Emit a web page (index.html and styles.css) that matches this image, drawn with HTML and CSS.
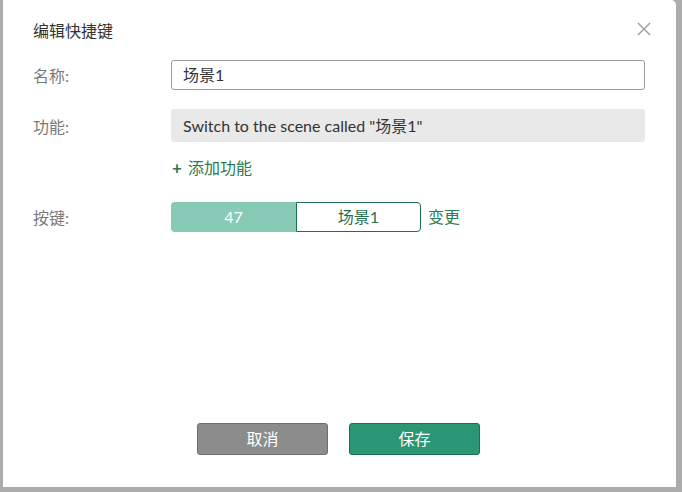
FILE: index.html
```html
<!DOCTYPE html>
<html>
<head>
<meta charset="utf-8">
<link rel="stylesheet" href="styles.css">
</head>
<body>
<div class="dialog">
  <div class="header">
    <div class="title">编辑快捷键</div>
    <svg class="close" width="14" height="14" viewBox="0 0 14 14"><path d="M1 1L13 13M13 1L1 13" stroke="#9a9a9a" stroke-width="1.4" fill="none"/></svg>
  </div>
  <div class="form">
    <div class="row row-name">
      <div class="label">名称:</div>
      <div class="input">场景1</div>
    </div>
    <div class="row row-func">
      <div class="label">功能:</div>
      <div class="func">Switch to the scene called "场景1"</div>
    </div>
    <div class="row row-add">
      <div class="label"></div>
      <div class="add"><span class="plus">+</span>添加功能</div>
    </div>
    <div class="row row-key">
      <div class="label">按键:</div>
      <div class="keys">
        <div class="key-code">47</div>
        <div class="key-name">场景1</div>
      </div>
      <div class="change">变更</div>
    </div>
  </div>
  <div class="footer">
    <div class="btn cancel">取消</div>
    <div class="btn save">保存</div>
  </div>
</div>
</body>
</html>
```
FILE: styles.css
```css
html, body {
  margin: 0;
  padding: 0;
}
body {
  background: #acacac;
  width: 682px;
  height: 492px;
  overflow: hidden;
  font-family: Lato, "Noto Sans CJK SC", sans-serif;
}
.dialog {
  margin-left: 3px;
  width: 673px;
  height: 487px;
  background: #fff;
  border-radius: 0 5px 0 0;
  position: relative;
  display: flex;
  flex-direction: column;
}
.header {
  height: 62px;
  display: flex;
  justify-content: space-between;
  align-items: flex-start;
}
.title {
  margin: 20px 0 0 30px;
  font-size: 16px;
  line-height: 22px;
  color: #333;
}
.close {
  margin: 22px 25px 0 0;
}
.form {
  display: flex;
  flex-direction: column;
}
.row {
  display: flex;
  align-items: center;
}
.label {
  width: 138px;
  padding-left: 30px;
  font-size: 16px;
  color: #7a7a7a;
  flex-shrink: 0;
}
.input {
  width: 461px;
  height: 28px;
  border: 1px solid #9a9a9a;
  border-radius: 3px;
  padding-left: 11px;
  line-height: 28px;
  font-size: 16px;
  color: #333;
}
.row-name {
  margin-top: -2px;
}
.row-func {
  margin-top: 19px;
}
.func {
  width: 462px;
  height: 33px;
  background: #e9e9e9;
  border-radius: 3px;
  padding-left: 12px;
  line-height: 33px;
  font-size: 16px;
  color: #333;
}
.row-add {
  margin-top: 14px;
}
.add {
  margin-left: 1px;
  font-size: 16px;
  line-height: 24px;
  color: #2b7a52;
  display: flex;
  align-items: center;
}
.plus {
  font-weight: bold;
  font-size: 17px;
  margin-right: 6px;
}
.row-key {
  margin-top: 22px;
}
.keys {
  display: flex;
  height: 30px;
}
.key-code {
  width: 125px;
  background: #87cab6;
  color: #fff;
  font-size: 16px;
  line-height: 30px;
  text-align: center;
  border-radius: 4px 0 0 4px;
}
.key-name {
  width: 123px;
  height: 28px;
  border: 1px solid #1f6e4c;
  border-radius: 0 4px 4px 0;
  color: #1f6e4c;
  font-size: 16px;
  line-height: 28px;
  text-align: center;
}
.change {
  margin-left: 7px;
  margin-top: -2px;
  font-size: 16px;
  color: #2b7a52;
}
.footer {
  margin-top: auto;
  margin-bottom: 32px;
  display: flex;
  justify-content: center;
  gap: 21px;
  padding-right: 2px;
}
.btn {
  width: 129px;
  height: 30px;
  border-radius: 3px;
  color: #fff;
  font-size: 16px;
  line-height: 30px;
  text-align: center;
}
.cancel {
  background: #8c8c8c;
  border: 1px solid #6e6e6e;
}
.save {
  background: #2a9673;
  border: 1px solid #1d6e52;
}
```
